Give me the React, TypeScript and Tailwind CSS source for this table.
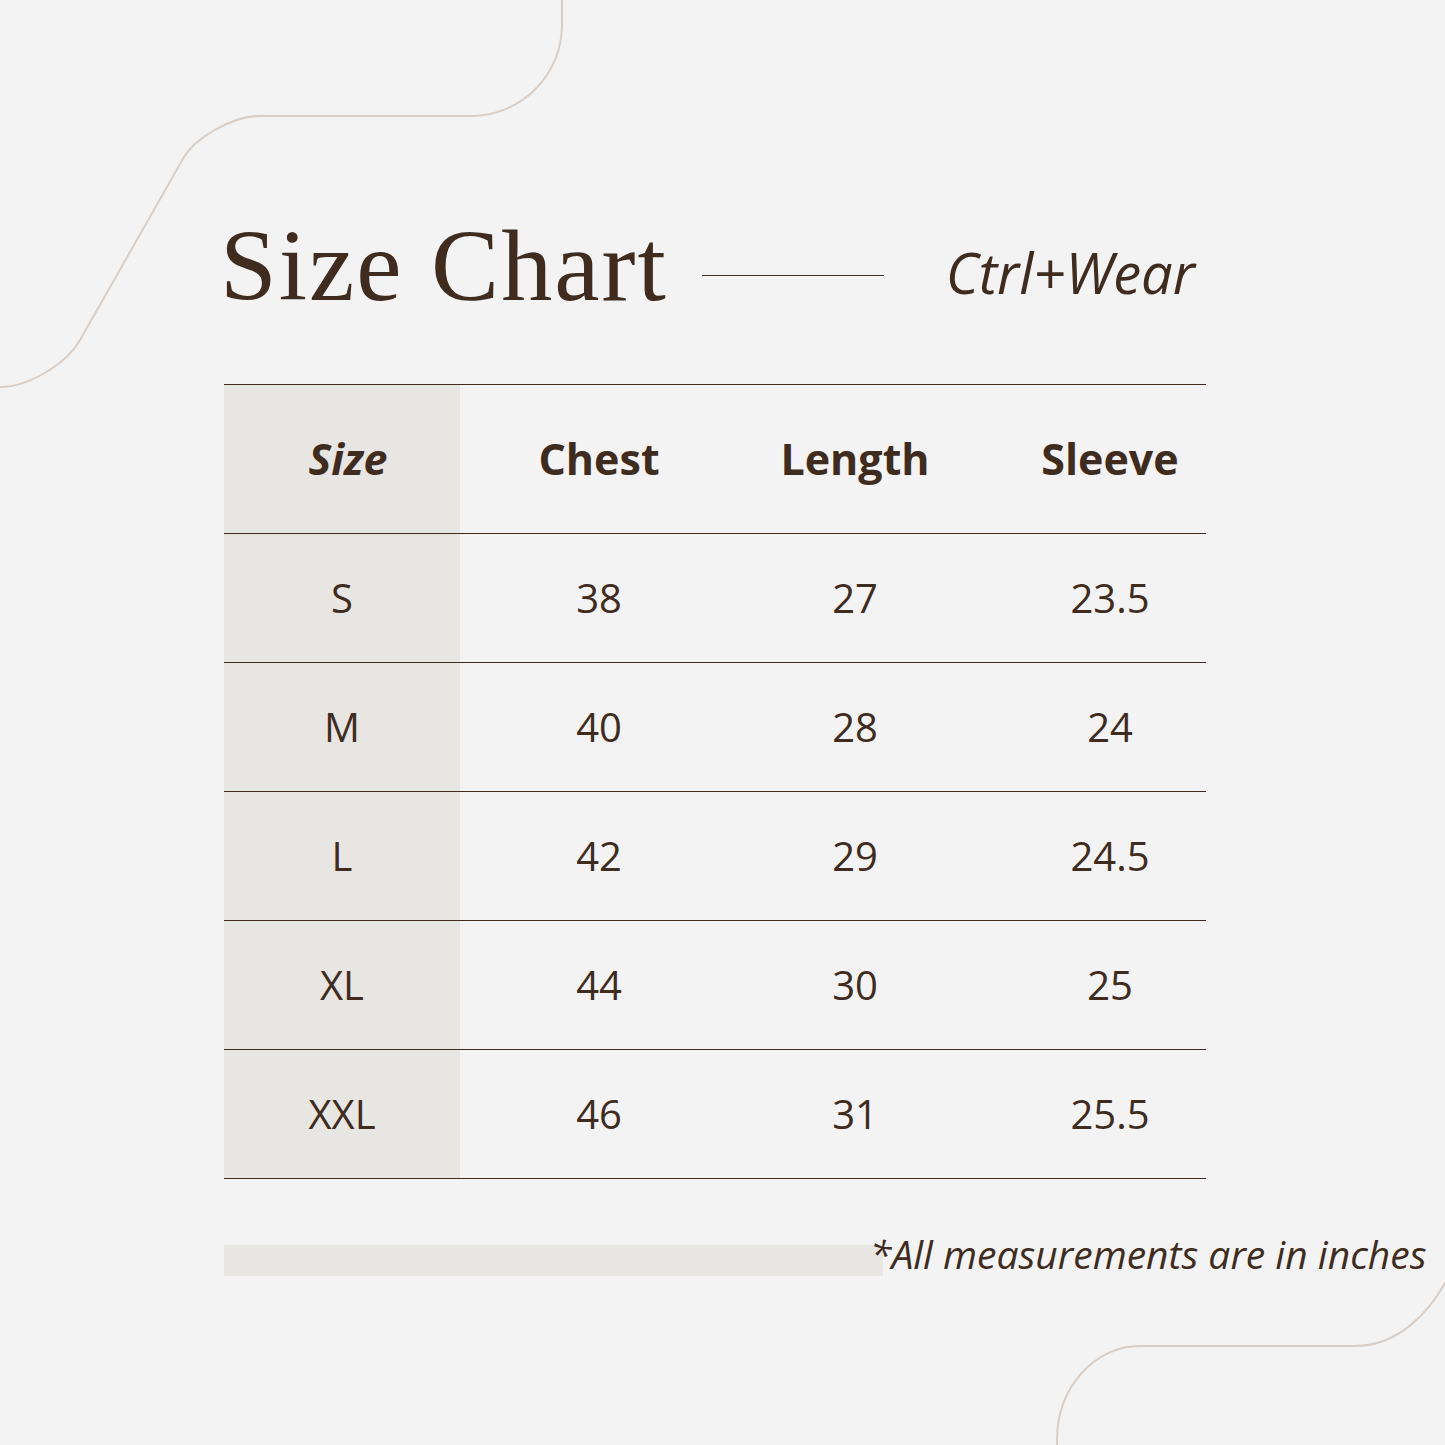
const rows = [
  ["S", "38", "27", "23.5"],
  ["M", "40", "28", "24"],
  ["L", "42", "29", "24.5"],
  ["XL", "44", "30", "25"],
  ["XXL", "46", "31", "25.5"],
];

const sans = "font-['Open_Sans',sans-serif]";

function Curves() {
  return (
    <svg className="absolute inset-0" width="1445" height="1445" viewBox="0 0 1445 1445" fill="none">
      <path
        d="M 562 -40 L 562 25 C 562 75 521 116 471 116 L 260 116 C 230 116 194 140 184 157 L 80 340 C 68 362 30 387 0 387"
        stroke="#d9cec6"
        strokeWidth="2"
      />
      <path
        d="M 1470 1240 L 1445 1283 C 1430 1310 1400 1346 1355 1346 L 1140 1346 C 1094 1346 1057 1388 1057 1440 L 1057 1470"
        stroke="#d9cec6"
        strokeWidth="2"
      />
    </svg>
  );
}

function Row({ cells, header }: { cells: string[]; header?: boolean }) {
  return (
    <div
      className={`grid grid-cols-[236px_278px_234px_234px] border-t border-[#3f2c1e] ${
        header ? "h-[149px]" : "h-[129px]"
      }`}
    >
      {cells.map((c, i) => (
        <div
          key={i}
          className={`flex items-center justify-center ${i === 0 ? "bg-[#e8e6e2]" : ""} ${
            i === 3 ? "pl-[42px]" : ""
          } ${i === 0 && header ? "pl-[12px]" : ""}`}
        >
          <span
            className={`${sans} text-[#3f2c1e] ${
              header ? "text-[43px] font-bold" : "text-[40px]"
            } ${header && i === 0 ? "italic" : ""}`}
          >
            {c}
          </span>
        </div>
      ))}
    </div>
  );
}

export default function App() {
  return (
    <div className="relative w-[1445px] h-[1445px] overflow-hidden bg-[#f3f3f3]">
      <Curves />
      <div className="relative pt-[215px] pl-[220px]">
        <div className="flex items-center">
          <h1 className="font-['Liberation_Serif',serif] text-[102px] leading-[102px] tracking-[2px] text-[#3f2c1e]">
            Size Chart
          </h1>
          <div className="ml-[34px] mt-[18px] w-[182px] h-px bg-[#3f2c1e]" />
          <div className={`${sans} ml-[62px] mt-[12px] italic text-[56px] text-[#3f2c1e]`}>
            Ctrl+Wear
          </div>
        </div>

        <div className="ml-[4px] mt-[67px] w-[982px] border-b border-[#3f2c1e]">
          <Row header cells={["Size", "Chest", "Length", "Sleeve"]} />
          {rows.map((r) => (
            <Row key={r[0]} cells={r} />
          ))}
        </div>

        <div className="ml-[4px] mt-[55px] flex items-start">
          <div className="mt-[11px] w-[659px] h-[31px] bg-[#e8e6e2]" />
          <p className={`${sans} -ml-[13px] italic text-[39px] leading-none text-[#3f2c1e] whitespace-nowrap`}>
            *All measurements are in inches
          </p>
        </div>
      </div>
    </div>
  );
}
